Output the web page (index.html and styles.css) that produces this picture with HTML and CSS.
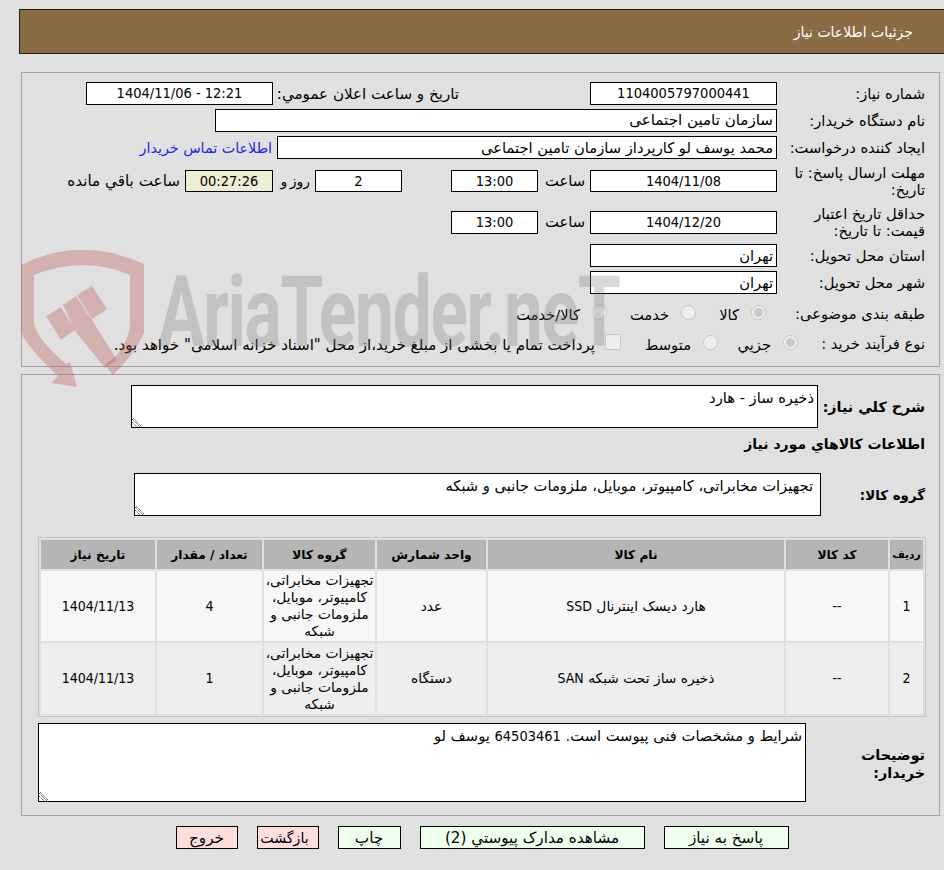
FILE: index.html
```html
<!DOCTYPE html>
<html lang="fa" dir="rtl">
<head>
<meta charset="utf-8">
<title>جزئیات اطلاعات نیاز</title>
<link rel="stylesheet" href="styles.css">
</head>
<body>
<header class="title-bar">جزئیات اطلاعات نیاز</header>

<section class="panel panel-info">
  <div class="row r1">
    <div class="lbl">شماره نیاز:</div>
    <div class="box w-main num">1104005797000441</div>
    <div class="pub-label">تاريخ و ساعت اعلان عمومي:</div>
    <div class="box w-main num" dir="ltr">1404/11/06 - 12:21</div>
  </div>
  <div class="row r2">
    <div class="lbl">نام دستگاه خریدار:</div>
    <div class="box left w-buyer">سازمان تامین اجتماعی</div>
  </div>
  <div class="row r3">
    <div class="lbl">ایجاد کننده درخواست:</div>
    <div class="box left w-creator">محمد یوسف لو کارپرداز سازمان تامین اجتماعی</div>
    <a class="contact" href="#">اطلاعات تماس خریدار</a>
  </div>
  <div class="row r4">
    <div class="lbl">مهلت ارسال پاسخ: تا تاریخ:</div>
    <div class="box w-main num">1404/11/08</div>
    <div class="hour">ساعت</div>
    <div class="box w-time num">13:00</div>
    <div class="box w-days num">2</div>
    <div class="days-lbl">روز و</div>
    <div class="box timer num">00:27:26</div>
    <div class="remain">ساعت باقي مانده</div>
  </div>
  <div class="row r5">
    <div class="lbl">حداقل تاریخ اعتبار قیمت: تا تاریخ:</div>
    <div class="box w-main num">1404/12/20</div>
    <div class="hour">ساعت</div>
    <div class="box w-time num">13:00</div>
  </div>
  <div class="row r6">
    <div class="lbl">استان محل تحویل:</div>
    <div class="box left w-main">تهران</div>
  </div>
  <div class="row r7">
    <div class="lbl">شهر محل تحویل:</div>
    <div class="box left w-main">تهران</div>
  </div>
  <div class="row r8">
    <div class="lbl">طبقه بندی موضوعی:</div>
    <label class="opt o-kala"><input type="radio" name="cat" checked disabled>کالا</label>
    <label class="opt o-khedmat"><input type="radio" name="cat" disabled>خدمت</label>
    <label class="opt"><input type="radio" name="cat" disabled>کالا/خدمت</label>
  </div>
  <div class="row r9">
    <div class="lbl">نوع فرآیند خرید :</div>
    <label class="opt o-jozi"><input type="radio" name="proc" checked disabled>جزيي</label>
    <label class="opt o-mid"><input type="radio" name="proc" disabled>متوسط</label>
    <label class="opt o-pay"><input type="checkbox" disabled>پرداخت تمام یا بخشی از مبلغ خرید،از محل "اسناد خزانه اسلامی" خواهد بود.</label>
  </div>
</section>

<section class="panel panel-items">
  <div class="row desc-row">
    <div class="blbl">شرح کلي نیاز:</div>
    <div class="ta ta-desc">ذخیره ساز - هارد<svg class="grip" viewBox="0 0 10 10" width="10" height="10"><path d="M0 2L8 10M0 5L5 10M1 1L9 9"/></svg></div>
  </div>
  <h2 class="sub">اطلاعات کالاهاي مورد نیاز</h2>
  <div class="row group-row">
    <div class="blbl g-lbl">گروه کالا:</div>
    <div class="ta ta-group">تجهیزات مخابراتی، کامپیوتر، موبایل، ملزومات جانبی و شبکه<svg class="grip" viewBox="0 0 10 10" width="10" height="10"><path d="M0 2L8 10M0 5L5 10M1 1L9 9"/></svg></div>
  </div>
  <table class="items">
    <colgroup>
      <col class="c1"><col class="c2"><col class="c3"><col class="c4"><col class="c5"><col class="c6"><col class="c7">
    </colgroup>
    <thead>
      <tr><th class="th-row">ردیف</th><th>کد کالا</th><th>نام کالا</th><th>واحد شمارش</th><th>گروه کالا</th><th>تعداد / مقدار</th><th>تاریخ نیاز</th></tr>
    </thead>
    <tbody>
      <tr class="odd"><td class="num">1</td><td class="num">--</td><td>هارد دیسک اینترنال <span class="num">SSD</span></td><td>عدد</td><td class="grp">تجهیزات مخابراتی، کامپیوتر، موبایل، ملزومات جانبی و شبکه</td><td class="num">4</td><td class="num">1404/11/13</td></tr>
      <tr class="even"><td class="num">2</td><td class="num">--</td><td>ذخیره ساز تحت شبکه <span class="num">SAN</span></td><td>دستگاه</td><td class="grp">تجهیزات مخابراتی، کامپیوتر، موبایل، ملزومات جانبی و شبکه</td><td class="num">1</td><td class="num">1404/11/13</td></tr>
    </tbody>
  </table>
  <div class="row notes-row">
    <div class="blbl n-lbl">توضیحات<br>خریدار:</div>
    <div class="ta ta-notes">شرایط و مشخصات فنی پیوست است. <span class="num">64503461</span> یوسف لو<svg class="grip" viewBox="0 0 10 10" width="10" height="10"><path d="M0 2L8 10M0 5L5 10M1 1L9 9"/></svg></div>
  </div>
</section>

<nav class="actions">
  <button class="btn ok b-reply" type="button">پاسخ به نیاز</button>
  <button class="btn ok b-docs" type="button">مشاهده مدارک پیوستي (2)</button>
  <button class="btn ok b-print" type="button">چاپ</button>
  <button class="btn no b-back" type="button">بازگشت</button>
  <button class="btn no b-exit" type="button">خروج</button>
</nav>

<div class="watermark" aria-hidden="true">
  <svg class="wm-shield" viewBox="0 0 126 140" width="126" height="140">
    <path class="wm-red" d="M1 15Q60 -15 124 14V83Q114 105 93 125L85 115L97 105Q110 88 110 73V25Q63 5 14 25V73Q16 88 46 114L50 112L57 137L31 133L38 126Q10 100 1 83Z"/>
    <path class="wm-red" d="M57 45L72 36L87 59L72 69Z"/>
    <path class="wm-red" d="M26 66L41 57L55 80L41 90Z"/>
    <path class="wm-red" d="M43 55L56 46L72 70L97 110L85 118L55 81Z"/>
  </svg>
  <span class="wm-text">AriaTender.neT</span>
</div>
</body>
</html>
```

FILE: styles.css
```css
* { box-sizing: border-box; }
html, body { margin: 0; padding: 0; }
body {
  position: relative;
  width: 944px;
  height: 870px;
  overflow: hidden;
  background: #e0e0e0;
  color: #000;
  font-family: "DejaVu Sans", sans-serif;
  font-size: 14.7px;
  line-height: 18px;
  padding-top: 9px;
}
.num { font-family: "DejaVu Sans Condensed", "DejaVu Sans", sans-serif; font-size: 14.5px; }
.title-bar {
  height: 45px;
  margin-left: 19px;
  padding-right: 31px;
  background: #8b6b42;
  border-top: 1px solid #222;
  border-bottom: 1px solid #222;
  border-left: 1px solid #222;
  color: #fff;
  font-size: 14px;
  line-height: 44px;
}
.panel {
  margin-left: 21px;
  margin-right: 4px;
  border: 1px solid #a3a3a3;
  padding-right: 14px;
}
.panel-info { height: 295px; margin-top: 18px; padding-top: 9px; }
.panel-items { height: 442px; margin-top: 7px; padding-top: 10px; }
.row { display: flex; align-items: center; }
.lbl { width: 148px; flex: none; line-height: 17px; }
.box {
  height: 23px;
  flex: none;
  background: #fff;
  border: 1px solid #000;
  text-align: center;
  line-height: 21px;
  white-space: nowrap;
  overflow: hidden;
}
.left { text-align: right; padding-right: 3px; }
.w-main { width: 187px; }
.w-buyer { width: 562px; font-size: 15.1px; }
.w-creator { width: 500px; }
.w-time { width: 87px; }
.w-days { width: 87px; margin-right: 49px; }
.pub-label { width: 181px; margin-right: 131px; margin-left: 5px; flex: none; white-space: nowrap; font-size: 15.1px; }
.contact { margin-right: 5px; color: #2222ee; text-decoration: none; white-space: nowrap; font-size: 14.3px; }
.hour { width: 52px; padding-right: 5px; flex: none; }
.days-lbl { width: 42px; padding-right: 5px; flex: none; white-space: nowrap; font-size: 14px; word-spacing: -2px; }
.timer { width: 88px; background: #eeeed2; }
.remain { margin-right: 5px; white-space: nowrap; font-size: 15.2px; }
.r1 { height: 23px; }
.r2 { height: 23px; margin-top: 4px; }
.r3 { height: 23px; margin-top: 4px; }
.r4 { height: 34px; margin-top: 5px; }
.r4 .box { height: 22px; line-height: 20px; }
.r5 { height: 34px; margin-top: 7px; }
.r6 { height: 23px; margin-top: 5px; }
.r7 { height: 23px; margin-top: 4px; }
.r8 { height: 24px; margin-top: 7px; }
.r9 { height: 24px; margin-top: 6px; }
.opt { display: flex; align-items: center; flex: none; white-space: nowrap; padding-top: 4px; }
.opt input { margin: 0 0 6px 12px; width: 15px; height: 15px; flex: none; }
.opt input[type="checkbox"] { width: 16px; height: 16px; margin-left: 10px; }
.o-kala { width: 70px; margin-right: 11px; }
.o-khedmat { width: 89px; }
.r9 .lbl { width: 127px; }
.o-jozi { width: 80px; }
.o-mid { width: 97px; }
.o-pay { font-size: 15.1px; }
.blbl { width: 105px; flex: none; font-size: 14.3px; font-weight: bold; }
.ta {
  position: relative;
  flex: none;
  background: #fff;
  border: 1px solid #000;
  padding: 3px;
}
.grip { position: absolute; left: 0; bottom: 0; fill: none; stroke: #666; stroke-width: 1; stroke-dasharray: 1.5 0.5; }
.ta-desc { width: 687px; height: 43px; margin-right: 2px; }
.sub { margin: 7px 0 0; height: 18px; font-size: 14px; line-height: 18px; font-weight: bold; }
.group-row { margin-top: 20px; }
.g-lbl { width: 104px; font-size: 13.4px; padding-top: 2px; }
.ta-group { width: 687px; height: 43px; padding-right: 7px; }
.items {
  margin-top: 21px;
  margin-right: -1px;
  width: 888px;
  table-layout: fixed;
  border-collapse: separate;
  border-spacing: 2px;
  border: 1px solid #c4c4c4;
  text-align: center;
}
.c1 { width: 33px; } .c2 { width: 102px; } .c3 { width: 296px; } .c4 { width: 109px; }
.c5 { width: 111px; } .c6 { width: 105px; } .c7 { width: 114px; }
.items th { height: 29px; padding: 0; background: #b5b5b5; font-size: 12.2px; font-weight: bold; }
.items .th-row { font-size: 10.8px; }
.items td { padding: 0; line-height: 17px; font-size: 13.8px; }
.items td.num, .items .num { font-size: 14px; }
.odd td { height: 70px; background: #f7f7f7; }
.even td { height: 71px; background: #eeeeee; }
.notes-row { margin-top: 6px; }
.n-lbl { width: 119px; padding-top: 2px; }
.ta-notes { width: 768px; height: 79px; }
.actions {
  display: flex;
  justify-content: center;
  gap: 19px;
  margin-top: 10px;
  margin-left: 20px;
}
.btn {
  height: 23px;
  padding: 0;
  border: 1px solid #000;
  border-radius: 0;
  font: inherit;
  font-size: 15.2px;
  color: #000;
}
.ok { background: #eeffee; }
.no { background: #ffdddd; }
.b-reply { width: 125px; }
.b-docs { width: 225px; }
.b-print { width: 63px; }
.b-back { width: 62px; font-size: 14.2px; padding-right: 6px; }
.b-exit { width: 62px; }
.watermark {
  position: absolute;
  left: 20px;
  top: 250px;
  width: 610px;
  height: 150px;
  pointer-events: none;
  direction: ltr;
}
.wm-shield { position: absolute; left: 0; top: 0; }
.wm-red { fill: rgba(190, 90, 90, 0.35); }
.wm-text {
  position: absolute;
  left: 138px;
  top: 8px;
  font-family: "Roboto", "Liberation Sans", sans-serif;
  font-weight: 700;
  font-size: 98px;
  line-height: 110px;
  letter-spacing: -2px;
  color: rgba(120, 120, 120, 0.28);
  white-space: nowrap;
  transform: scaleX(0.71);
  transform-origin: left top;
}
```
